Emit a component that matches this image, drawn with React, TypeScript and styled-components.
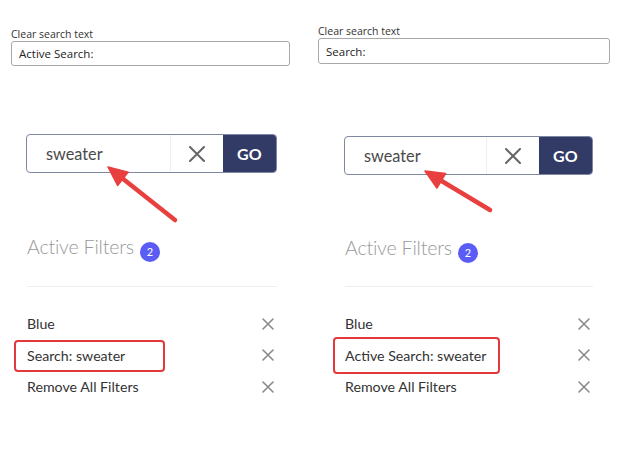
import React from "react";
import styled, { createGlobalStyle } from "styled-components";

const GlobalStyle = createGlobalStyle`
  html, body {
    margin: 0;
    padding: 0;
    background: #ffffff;
  }
  body {
    width: 628px;
    height: 452px;
    overflow: hidden;
    font-family: "Open Sans", "Noto Sans", sans-serif;
  }
`;

const Page = styled.div`
  display: flex;
  width: 628px;
  height: 452px;
`;

const Panel = styled.div<{ $width: number; $formLeft: number; $top: number }>`
  position: relative;
  width: ${(p) => p.$width}px;
  flex-shrink: 0;
  padding-top: ${(p) => p.$top}px;
  padding-left: ${(p) => p.$formLeft}px;
  box-sizing: border-box;
`;

const Form = styled.div<{ $width: number }>`
  display: flex;
  flex-direction: column;
  width: ${(p) => p.$width}px;
`;

const Label = styled.label`
  font-family: "Open Sans", "Noto Sans", sans-serif;
  font-size: 10.5px;
  line-height: 14px;
  color: #333;
`;

const TextInput = styled.div<{ $height: number }>`
  height: ${(p) => p.$height}px;
  box-sizing: border-box;
  border: 1px solid #a8a8a8;
  border-radius: 3px;
  padding-left: 7px;
  display: flex;
  align-items: center;
  font-family: "Open Sans", "Noto Sans", sans-serif;
  font-size: 11.5px;
  color: #222;
`;

const Widget = styled.div<{ $left: number; $width: number; $gap: number }>`
  margin-left: ${(p) => p.$left}px;
  margin-top: ${(p) => p.$gap}px;
  width: ${(p) => p.$width}px;
  font-family: Lato, "Noto Sans", sans-serif;
`;

const SearchBox = styled.div`
  display: flex;
  height: 39px;
  box-sizing: border-box;
  border: 1px solid #7f87a3;
  border-radius: 4px;
  overflow: hidden;
`;

const SearchText = styled.div`
  flex: 1;
  display: flex;
  align-items: center;
  padding-left: 19px;
  font-size: 16.3px;
  color: #4a4a4a;
`;

const ClearButton = styled.div`
  width: 52px;
  border-left: 1px solid #efefef;
  display: flex;
  align-items: center;
  justify-content: center;
`;

const GoButton = styled.div`
  width: 53px;
  background: #323a66;
  color: #ffffff;
  font-weight: 700;
  font-size: 16px;
  display: flex;
  align-items: center;
  justify-content: center;
  letter-spacing: 0.3px;
`;

const Heading = styled.div<{ $gap: number }>`
  margin-top: ${(p) => p.$gap}px;
  margin-left: 1px;
  display: flex;
  align-items: flex-end;
  gap: 6px;
  font-size: 19.6px;
  letter-spacing: -0.2px;
  font-weight: 300;
  line-height: 28px;
  color: #9a9a9a;
`;

const Badge = styled.span`
  width: 20px;
  height: 20px;
  border-radius: 50%;
  background: #5a5cf5;
  color: #ffffff;
  font-size: 11px;
  font-weight: 400;
  letter-spacing: 0;
  line-height: 20px;
  text-align: center;
  margin-bottom: -1px;
`;

const Divider = styled.div<{ $gap: number }>`
  margin: ${(p) => p.$gap}px 0 0 1px;
  height: 1px;
  background: #efefef;
`;

const FilterList = styled.ul`
  list-style: none;
  margin: 21px 0 0 1px;
  padding: 0;
`;

const FilterRow = styled.li`
  position: relative;
  height: 31.5px;
  display: flex;
  align-items: center;
  justify-content: space-between;
  padding-right: 3px;
  font-size: 14.2px;
  color: #333;
`;

const Highlight = styled.span<{ $left: number; $top: number; $w: number; $h: number }>`
  position: absolute;
  left: ${(p) => p.$left}px;
  top: ${(p) => p.$top}px;
  width: ${(p) => p.$w}px;
  height: ${(p) => p.$h}px;
  box-sizing: border-box;
  border: 2.5px solid #e3393d;
  border-radius: 4px;
  pointer-events: none;
`;

const Overlay = styled.svg`
  position: absolute;
  left: 0;
  top: 0;
  pointer-events: none;
`;

const Cross = ({ size, stroke, color }: { size: number; stroke: number; color: string }) => (
  <svg width={size} height={size} viewBox={`0 0 ${size} ${size}`}>
    <path
      d={`M1 1 L${size - 1} ${size - 1} M${size - 1} 1 L1 ${size - 1}`}
      stroke={color}
      strokeWidth={stroke}
      strokeLinecap="round"
    />
  </svg>
);

type Pt = [number, number];

const Arrow = ({ tip, tail, width, height }: { tip: Pt; tail: Pt; width: number; height: number }) => {
  const dx = tip[0] - tail[0];
  const dy = tip[1] - tail[1];
  const len = Math.hypot(dx, dy);
  const ux = dx / len;
  const uy = dy / len;
  const bx = tip[0] - ux * 19;
  const by = tip[1] - uy * 19;
  const px = -uy * 8.5;
  const py = ux * 8.5;
  return (
    <Overlay width={width} height={height}>
      <line x1={tail[0]} y1={tail[1]} x2={bx + ux * 2} y2={by + uy * 2} stroke="#e8403f" strokeWidth={4.5} strokeLinecap="round" />
      <polygon
        points={`${tip[0]},${tip[1]} ${bx + px},${by + py} ${bx - px},${by - py}`}
        fill="#e8403f"
        stroke="#e8403f"
        strokeWidth={1.5}
        strokeLinejoin="round"
      />
    </Overlay>
  );
};

interface Config {
  width: number;
  top: number;
  formLeft: number;
  formWidth: number;
  inputHeight: number;
  value: string;
  widgetLeft: number;
  widgetWidth: number;
  searchGap: number;
  headingGap: number;
  dividerGap: number;
  searchLabel: string;
  mark: { left: number; top: number; w: number; h: number };
  tip: Pt;
  tail: Pt;
}

const FilterPanel = ({ c }: { c: Config }) => {
  const rows = ["Blue", `${c.searchLabel}sweater`, "Remove All Filters"];
  return (
    <Panel $width={c.width} $formLeft={c.formLeft} $top={c.top}>
      <Form $width={c.formWidth}>
        <Label>Clear search text</Label>
        <TextInput $height={c.inputHeight}>{c.value}</TextInput>
      </Form>
      <Widget $left={c.widgetLeft - c.formLeft} $width={c.widgetWidth} $gap={c.searchGap}>
        <SearchBox>
          <SearchText>sweater</SearchText>
          <ClearButton>
            <Cross size={16} stroke={2} color="#666" />
          </ClearButton>
          <GoButton>GO</GoButton>
        </SearchBox>
        <Heading $gap={c.headingGap}>
          Active Filters <Badge>2</Badge>
        </Heading>
        <Divider $gap={c.dividerGap} />
        <FilterList>
          {rows.map((r, i) => (
            <FilterRow key={r}>
              <span>{r}</span>
              <Cross size={12} stroke={1.6} color="#8a8a8a" />
              {i === 1 && <Highlight $left={c.mark.left} $top={c.mark.top} $w={c.mark.w} $h={c.mark.h} />}
            </FilterRow>
          ))}
        </FilterList>
      </Widget>
      <Arrow tip={c.tip} tail={c.tail} width={c.width} height={452} />
    </Panel>
  );
};

const panels: Config[] = [
  {
    width: 310,
    top: 27,
    formLeft: 11,
    formWidth: 279,
    inputHeight: 25,
    value: "Active Search:",
    widgetLeft: 26,
    widgetWidth: 251,
    searchGap: 68,
    headingGap: 60,
    dividerGap: 25,
    searchLabel: "Search: ",
    mark: { left: -13, top: 0, w: 151, h: 32 },
    tip: [108, 167],
    tail: [175, 220],
  },
  {
    width: 318,
    top: 24,
    formLeft: 8,
    formWidth: 292,
    inputHeight: 26,
    value: "Search:",
    widgetLeft: 34,
    widgetWidth: 249,
    searchGap: 72,
    headingGap: 59,
    dividerGap: 24,
    searchLabel: "Active Search: ",
    mark: { left: -12, top: -3, w: 167, h: 37 },
    tip: [115, 171],
    tail: [180, 210],
  },
];

export default function App() {
  return (
    <>
      <GlobalStyle />
      <Page>
        {panels.map((c, i) => (
          <FilterPanel key={i} c={c} />
        ))}
      </Page>
    </>
  );
}
